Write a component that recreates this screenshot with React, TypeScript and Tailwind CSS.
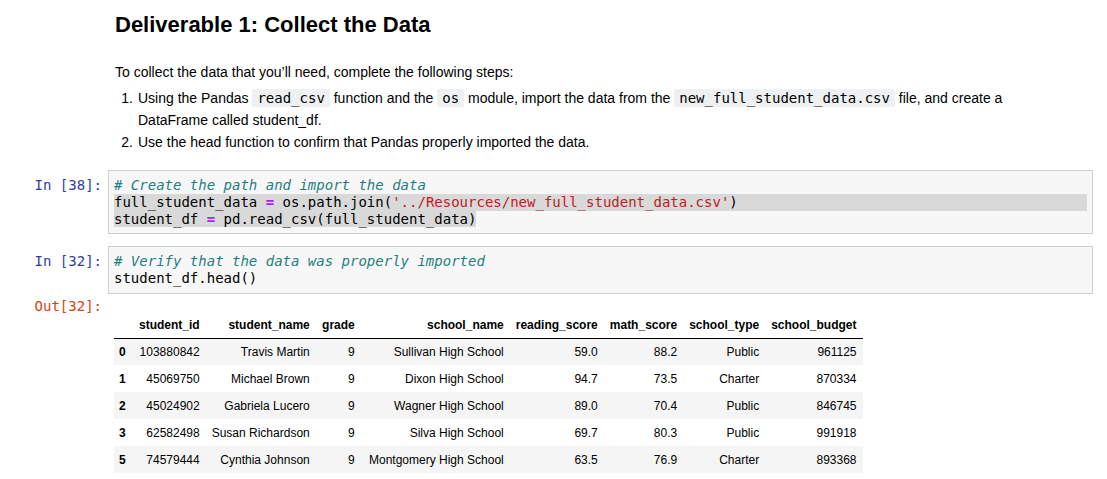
import React from "react";

const sans = "font-['Liberation_Sans','Helvetica',Arial,sans-serif]";
const mono = "font-['DejaVu_Sans_Mono','Liberation_Mono',monospace]";

const columns = [
  { key: "student_id", width: "w-[71px]" },
  { key: "student_name", width: "w-[110px]" },
  { key: "grade", width: "w-[45px]" },
  { key: "school_name", width: "w-[149px]" },
  { key: "reading_score", width: "w-[94px]" },
  { key: "math_score", width: "w-[78px]" },
  { key: "school_type", width: "w-[82px]" },
  { key: "school_budget", width: "w-[96px]" },
];

const rows = [
  ["0", "103880842", "Travis Martin", "9", "Sullivan High School", "59.0", "88.2", "Public", "961125"],
  ["1", "45069750", "Michael Brown", "9", "Dixon High School", "94.7", "73.5", "Charter", "870334"],
  ["2", "45024902", "Gabriela Lucero", "9", "Wagner High School", "89.0", "70.4", "Public", "846745"],
  ["3", "62582498", "Susan Richardson", "9", "Silva High School", "69.7", "80.3", "Public", "991918"],
  ["5", "74579444", "Cynthia Johnson", "9", "Montgomery High School", "63.5", "76.9", "Charter", "893368"],
];

function InlineCode({ children }: { children: React.ReactNode }) {
  return (
    <code className={`${mono} rounded-[2px] bg-[#eff0f1] px-[5px] py-[1px] text-[14px]`}>{children}</code>
  );
}

function Prompt({ label, out }: { label: string; out?: boolean }) {
  return (
    <div
      className={`${mono} w-[108px] shrink-0 pr-[6px] text-right text-[14px] leading-[17px] ${
        out ? "text-[#d84315]" : "pt-[7px] text-[#303f9f]"
      }`}
    >
      {label}
    </div>
  );
}

const Eq = () => <span className="font-bold text-[#aa22ff]">=</span>;

export default function App() {
  return (
    <div className={`${sans} h-[479px] w-[1107px] overflow-hidden bg-white text-black`}>
      {/* markdown cell */}
      <div className="flex pt-[11px]">
        <div className="w-[108px] shrink-0" />
        <div className="pl-[7px]">
          <h2 className="text-[22px] font-bold leading-[28px]">Deliverable 1: Collect the Data</h2>
          <p className="mt-[23px] text-[14px] leading-[21px]">
            To collect the data that you’ll need, complete the following steps:
          </p>
          <ol className="mt-[4px] text-[14px] leading-[22px]">
            <li className="flex">
              <span className="w-[23px] shrink-0 pr-[5px] text-right">1.</span>
              <span className="w-[900px]">
                Using the Pandas <InlineCode>read_csv</InlineCode> function and the <InlineCode>os</InlineCode> module,
                import the data from the <InlineCode>new_full_student_data.csv</InlineCode> file, and create a
                DataFrame called student_df.
              </span>
            </li>
            <li className="flex">
              <span className="w-[23px] shrink-0 pr-[5px] text-right">2.</span>
              <span>Use the head function to confirm that Pandas properly imported the data.</span>
            </li>
          </ol>
        </div>
      </div>

      {/* code cell 38 */}
      <div className="mt-[17px] flex">
        <Prompt label="In [38]:" />
        <div
          className={`${mono} w-[985px] border border-[#cfcfcf] bg-[#f7f7f7] px-[5px] pt-[6px] pb-[5px] text-[14px] leading-[17px] whitespace-pre`}
        >
          <div className="italic text-[#1f7f7f]"># Create the path and import the data</div>
          <div className="bg-[#d9d9d9]">
            full_student_data <Eq /> os.path.join(<span className="text-[#ba2121]">'../Resources/new_full_student_data.csv'</span>)
          </div>
          <div>
            <span className="bg-[#d9d9d9]">
              student_df <Eq /> pd.read_csv(full_student_data)
            </span>
          </div>
        </div>
      </div>

      {/* code cell 32 */}
      <div className="mt-[12px] flex">
        <Prompt label="In [32]:" />
        <div
          className={`${mono} w-[985px] border border-[#cfcfcf] bg-[#f7f7f7] px-[5px] pt-[6px] pb-[6px] text-[14px] leading-[17px] whitespace-pre`}
        >
          <div className="italic text-[#1f7f7f]"># Verify that the data was properly imported</div>
          <div>student_df.head()</div>
        </div>
      </div>

      {/* output */}
      <div className="mt-[4px] flex">
        <Prompt label="Out[32]:" out />
        <div className="pt-[14px] pl-[6px]">
          <table className="border-collapse whitespace-nowrap text-[12px] leading-[14px]">
            <thead>
              <tr className="h-[26px] border-b border-black">
                <th className="w-[19px]" />
                {columns.map((c) => (
                  <th key={c.key} className={`${c.width} px-[6px] text-right font-bold`}>
                    {c.key}
                  </th>
                ))}
              </tr>
            </thead>
            <tbody>
              {rows.map((r, i) => (
                <tr key={r[0]} className={`h-[27px] ${i % 2 === 0 ? "bg-[#f5f5f5]" : "bg-white"}`}>
                  <th className="px-[5px] text-left font-bold">{r[0]}</th>
                  {r.slice(1).map((cell, j) => (
                    <td key={j} className="px-[6px] text-right">
                      {cell}
                    </td>
                  ))}
                </tr>
              ))}
            </tbody>
          </table>
        </div>
      </div>
    </div>
  );
}
